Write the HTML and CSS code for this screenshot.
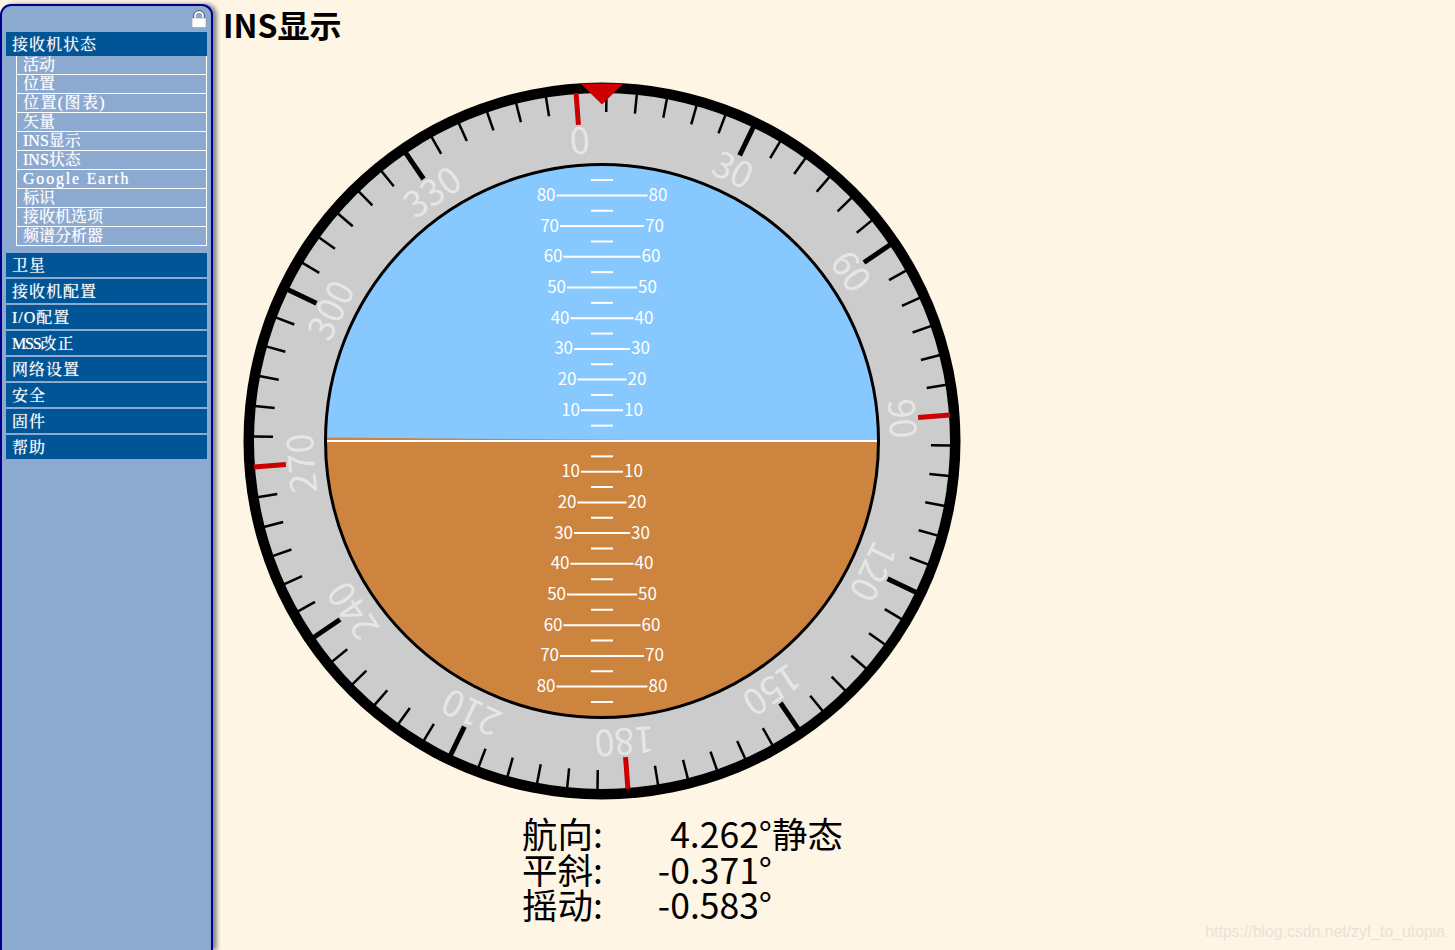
FILE: index.html
```html
<!DOCTYPE html>
<html lang="zh">
<head>
<meta charset="UTF-8">
<meta name="viewport" content="width=device-width, initial-scale=1.0">
<title>INS显示</title>
<link rel="stylesheet" href="styles.css">
</head>
<body>
<nav class="sidebar">
  <div class="lock-row">
    <svg class="lock" width="16" height="18" viewBox="0 0 16 18">
      <path d="M2.6 9V6a5.4 5.4 0 0 1 10.8 0v3" fill="none" stroke="#555" stroke-width="1"/>
      <path d="M4 9V6a4 4 0 0 1 8 0v3" fill="none" stroke="#fff" stroke-width="1.6"/>
      <rect x="1" y="8" width="14" height="9.5" rx="1" fill="#fff" stroke="#999" stroke-width=".6"/>
    </svg>
  </div>
  <a class="menu-head">接收机状态</a>
  <div class="submenu">
    <a>活动</a>
    <a>位置</a>
    <a class="spaced">位置(图表)</a>
    <a>矢量</a>
    <a>INS显示</a>
    <a>INS状态</a>
    <a class="wide">Google Earth</a>
    <a>标识</a>
    <a>接收机选项</a>
    <a>频谱分析器</a>
  </div>
  <div class="menu-list">
    <a class="menu-head">卫星</a>
    <a class="menu-head">接收机配置</a>
    <a class="menu-head">I/O配置</a>
    <a class="menu-head"><span class="tight">MSS</span>改正</a>
    <a class="menu-head">网络设置</a>
    <a class="menu-head">安全</a>
    <a class="menu-head">固件</a>
    <a class="menu-head">帮助</a>
  </div>
</nav>

<main class="content">
  <h1>INS显示</h1>
  <svg id="dial" class="dial" width="720" height="720" viewBox="-360 -360 720 720">
    <circle r="358.5" fill="#000"/>
    <circle r="348" fill="#ccc"/>
    <g id="scale" transform="rotate(-4.262)"></g>
    <polygon points="-21.5,-357.5 21.5,-357.5 0,-336.5" fill="#c00"/>
    <clipPath id="ball"><circle r="276"/></clipPath>
    <g clip-path="url(#ball)">
      <rect x="-280" y="-280" width="560" height="560" fill="#87c8ff"/>
      <polygon points="-280,-3.5 280,0.8 280,280 -280,280" fill="#cc843f"/>
      <rect x="-276" y="-1" width="552" height="2" fill="#fff"/>
      <g id="ladder"></g>
    </g>
    <circle r="276.5" fill="none" stroke="#000" stroke-width="3"/>
  </svg>
  <div class="readout">
    <span>航向:</span><span class="value">4.262°</span><span>静态</span>
    <span>平斜:</span><span class="value">-0.371°</span><span></span>
    <span>摇动:</span><span class="value">-0.583°</span><span></span>
  </div>
</main>
<div class="watermark">https://blog.csdn.net/zyf_to_utopia</div>

<script>
const NS = 'http://www.w3.org/2000/svg';

function add(parent, tag, attrs, text) {
  const el = document.createElementNS(NS, tag);
  for (let k in attrs) el.setAttribute(k, attrs[k]);
  if (text !== undefined) el.textContent = text;
  parent.appendChild(el);
  return el;
}

// compass ring: tick every 5 deg, heavy every 30, red on the cardinals
const scale = document.getElementById('scale');
for (let deg = 0; deg < 360; deg += 5) {
  const major = deg % 30 === 0;
  const red = deg % 90 === 0;
  add(scale, 'line', {
    x1: 0, y1: -349, x2: 0, y2: major ? -317 : -329,
    stroke: red ? '#c00' : '#000',
    'stroke-width': major ? 5 : 2.5,
    transform: `rotate(${deg})`
  });
  if (major) {
    add(scale, 'text', { class: 'dial-label', x: 0, y: -288, transform: `rotate(${deg})` }, deg);
  }
}

// pitch ladder, 30.7px per 10 deg
const ladder = document.getElementById('ladder');
for (let p = 10; p <= 80; p += 10) {
  const half = 21 + (p / 10 - 1) * 3.5;
  [-1, 1].forEach(side => {
    const y = side * p * 3.07;
    add(ladder, 'line', { class: 'rung', x1: -half, y1: y, x2: half, y2: y });
    add(ladder, 'text', { class: 'rung-label', x: -half - 1, y: y + 5.5, 'text-anchor': 'end' }, p);
    add(ladder, 'text', { class: 'rung-label', x: half + 1, y: y + 5.5 }, p);
    const yShort = side * (p - 5) * 3.07;
    add(ladder, 'line', { class: 'rung', x1: -11, y1: yShort, x2: 11, y2: yShort });
  });
  if (p === 80) {
    [-1, 1].forEach(side => {
      const y = side * 85 * 3.07;
      add(ladder, 'line', { class: 'rung', x1: -11, y1: y, x2: 11, y2: y });
    });
  }
}
</script>
</body>
</html>
```

FILE: styles.css
```css
html, body { height: 100%; }
body { margin: 0; background: #fff5e5; color: #000; font-family: "Noto Sans CJK SC", "Noto Sans", sans-serif; display: flex; overflow: hidden; position: relative; }

.sidebar { box-sizing: border-box; flex: 0 0 213px; height: 946px; margin-top: 4px; padding: 0 4px; background: #8ca9d0; border: 2px solid #00008b; border-bottom: none; border-radius: 11px 11px 0 0; box-shadow: 4px 0 4px #8a8a8a; }
.lock-row { display: flex; justify-content: flex-end; height: 24px; padding-top: 4px; box-sizing: border-box; }
.lock-row .lock { display: block; margin-right: 0; }
.sidebar a { display: block; color: #fff; white-space: nowrap; font-family: "Liberation Serif", "Noto Serif CJK SC", "Noto Sans CJK SC", serif; text-shadow: 0 0 1px rgba(255,255,255,.7); }
.menu-head { box-sizing: border-box; height: 24px; line-height: 26px; padding-left: 6px; margin-top: 2px; background: #005596; font-size: 16px; letter-spacing: 1px; }
.submenu { margin-left: 10px; border: 1px solid #fff; border-top: none; }
.submenu a { box-sizing: border-box; height: 19px; line-height: 18px; padding-left: 6px; font-size: 16px; border-bottom: 1px solid #fff; }
.submenu a:last-child { border-bottom: none; height: 18px; }
.submenu .spaced { letter-spacing: 1.4px; }
.submenu .wide { letter-spacing: 1.8px; }
.tight { letter-spacing: -1.2px; }
.menu-list { margin-top: 7px; }

.content { flex: 1; padding-left: 10px; }
h1 { margin: 0; height: 81px; padding-top: 3px; box-sizing: border-box; font-size: 32px; line-height: 42px; font-weight: 700; }
.dial { display: block; margin-left: 19px; }
.dial-label { font-family: "Noto Sans CJK SC", sans-serif; font-size: 36px; fill: #e6e6e6; text-anchor: middle; }
.rung { stroke: #fff; stroke-width: 2; }
.rung-label { font-size: 17px; fill: #fff; }

.readout { display: grid; grid-template-columns: 100px 150px auto; margin: 14px 0 0 299px; font-size: 35.5px; line-height: 35.5px; }
.value { text-align: right; }

.watermark { position: absolute; right: 10px; bottom: 9px; font-family: "Liberation Sans", sans-serif; font-size: 15.8px; color: #e9e2d6; }
```
